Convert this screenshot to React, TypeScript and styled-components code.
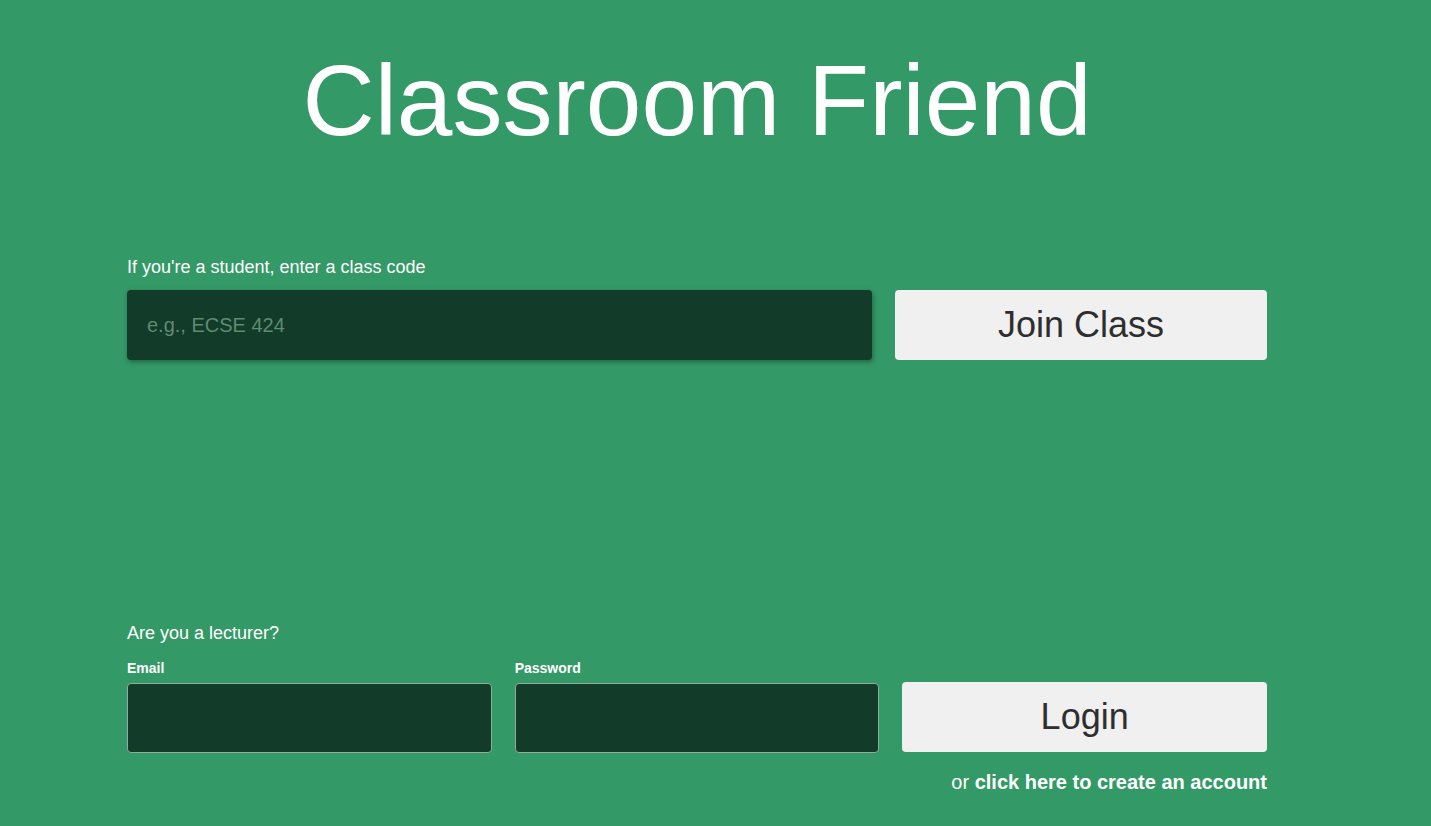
import React from "react";
import styled, { createGlobalStyle } from "styled-components";

const GlobalStyle = createGlobalStyle`
  html, body {
    margin: 0;
    padding: 0;
    background: #339966;
  }
  body {
    font-family: "Liberation Sans", Arial, sans-serif;
    color: #ffffff;
  }
  * { box-sizing: border-box; }
`;

const Page = styled.div`
  min-height: 826px;
  background: #339966;
  padding-left: 127px;
`;

const Container = styled.div`
  width: 1140px;
  display: flex;
  flex-direction: column;
`;

const Title = styled.h1`
  margin: 43px 0 0 0;
  font-size: 100px;
  line-height: 115px;
  font-weight: 400;
  text-align: center;
  color: #ffffff;
`;

const SectionLabel = styled.div<{ $top: number }>`
  margin-top: ${(p) => p.$top}px;
  font-size: 18px;
  line-height: 21px;
`;

const StudentRow = styled.div`
  margin-top: 12px;
  display: grid;
  grid-template-columns: 745px 372px;
  column-gap: 23px;
`;

const CodeInput = styled.input`
  height: 70px;
  background: #133b29;
  border: none;
  border-radius: 4px;
  box-shadow: 1px 2px 5px rgba(0, 0, 0, 0.35);
  padding: 0 20px;
  font-family: "Liberation Sans", Arial, sans-serif;
  font-size: 20px;
  color: #ffffff;
  outline: none;
  &::placeholder {
    color: #5d8c71;
  }
`;

const ActionButton = styled.button`
  height: 70px;
  background: #f0f0f0;
  border: none;
  border-radius: 4px;
  font-family: "Liberation Sans", Arial, sans-serif;
  font-size: 36px;
  color: #2e2e2e;
  cursor: pointer;
  padding: 0;
`;

const LecturerRow = styled.div`
  margin-top: 16px;
  display: grid;
  grid-template-columns: repeat(3, 1fr);
  column-gap: 23px;
  align-items: end;
`;

const Field = styled.label`
  display: flex;
  flex-direction: column;
  gap: 7px;
`;

const FieldLabel = styled.span`
  font-size: 14px;
  line-height: 16px;
  font-weight: 700;
`;

const TextInput = styled.input`
  height: 70px;
  background: #133b29;
  border: 1px solid #93ab9d;
  border-radius: 4px;
  padding: 0 12px;
  font-family: "Liberation Sans", Arial, sans-serif;
  font-size: 18px;
  color: #ffffff;
  outline: none;
`;

const LoginButton = styled(ActionButton)`
  margin-bottom: 1px;
`;

const CreateLine = styled.div`
  margin-top: 18px;
  text-align: right;
  font-size: 20px;
  line-height: 23px;
`;

const CreateLink = styled.a`
  font-weight: 700;
  color: #ffffff;
  text-decoration: none;
  cursor: pointer;
`;

export default function App() {
  return (
    <>
      <GlobalStyle />
      <Page>
        <Container>
          <Title>Classroom Friend</Title>
          <SectionLabel $top={99}>If you're a student, enter a class code</SectionLabel>
          <StudentRow>
            <CodeInput placeholder="e.g., ECSE 424" />
            <ActionButton>Join Class</ActionButton>
          </StudentRow>
          <SectionLabel $top={263}>Are you a lecturer?</SectionLabel>
          <LecturerRow>
            <Field>
              <FieldLabel>Email</FieldLabel>
              <TextInput type="email" />
            </Field>
            <Field>
              <FieldLabel>Password</FieldLabel>
              <TextInput type="password" />
            </Field>
            <LoginButton>Login</LoginButton>
          </LecturerRow>
          <CreateLine>
            or <CreateLink>click here to create an account</CreateLink>
          </CreateLine>
        </Container>
      </Page>
    </>
  );
}
